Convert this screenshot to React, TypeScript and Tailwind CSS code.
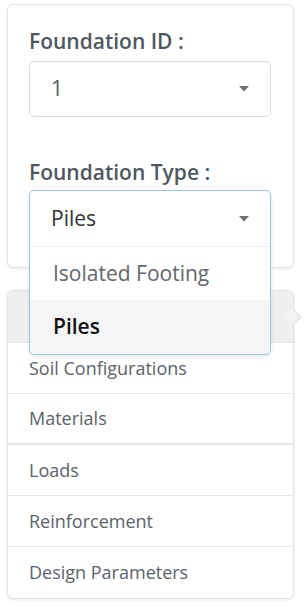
import React from 'react';

const navItems = ['Soil Configurations', 'Materials', 'Loads', 'Reinforcement', 'Design Parameters'];

const Caret: React.FC = () => (
  <svg width="10" height="6" viewBox="0 0 10 6" className="shrink-0">
    <path d="M0 0 L10 0 L5 5.5 Z" fill="#6b7075" />
  </svg>
);

const App: React.FC = () => {
  return (
    <div
      className="w-[306px] h-[605px] bg-white overflow-hidden pt-[4px] pl-[7px]"
      style={{ fontFamily: '"Open Sans", "Liberation Sans", sans-serif' }}
    >
      {/* selection card */}
      <div className="relative z-10 w-[287px] border border-[#e2e2e2] rounded-[6px] bg-white shadow-[0_1px_3px_rgba(0,0,0,0.08)] px-[21px] pt-[22px] pb-[21px]">
        <div className="text-[21px] leading-[28px] font-semibold text-[#4f5861]">Foundation ID :</div>
        <div className="mt-[6px] h-[56px] w-[242px] border border-[#dcdcdc] rounded-[5px] flex items-center justify-between pl-[21px] pr-[21px] text-[21px] text-[#555b62]">
          <span>1</span>
          <Caret />
        </div>

        <div className="mt-[41px] text-[21px] leading-[28px] font-semibold text-[#4f5861]">Foundation Type :</div>
        <div className="relative mt-[4px] h-[56px] w-[242px]">
          <div className="absolute left-0 top-0 w-[242px] border border-[#93c8de] rounded-[5px] bg-white shadow-[0_2px_4px_rgba(0,0,0,0.08)] overflow-hidden">
            <div className="h-[55px] flex items-center justify-between pl-[21px] pr-[21px] text-[21px] text-[#333]">
              <span>Piles</span>
              <Caret />
            </div>
            <div className="h-[54px] flex items-center pl-[23px] text-[21px] text-[#62676d] border-t border-[#f0f0f0]">
              Isolated Footing
            </div>
            <div className="h-[54px] flex items-center pl-[23px] text-[21px] font-semibold text-[#111] bg-[#f5f5f5]">
              Piles
            </div>
          </div>
        </div>
      </div>

      {/* navigation card */}
      <div className="relative mt-[22px] w-[287px] border border-[#e2e2e2] rounded-[6px] bg-white shadow-[0_1px_3px_rgba(0,0,0,0.08)]">
        <div className="h-[52px] bg-[#efefef] rounded-t-[6px] border-b border-[#e4e4e4]" />
        <div className="absolute right-[-6px] top-[20px] w-[12px] h-[12px] rotate-45 bg-[#f3f3f3] border-t border-r border-[#dedede]" />
        {navItems.map((item, i) => (
          <div
            key={item}
            className={`h-[51px] flex items-center pl-[21px] text-[18px] text-[#5b636b] ${
              i === navItems.length - 1 ? '' : i === 1 ? 'border-b-2 border-[#e6e6e6]' : 'border-b border-[#e6e6e6]'
            }`}
          >
            {item}
          </div>
        ))}
      </div>
    </div>
  );
};

export default App;
